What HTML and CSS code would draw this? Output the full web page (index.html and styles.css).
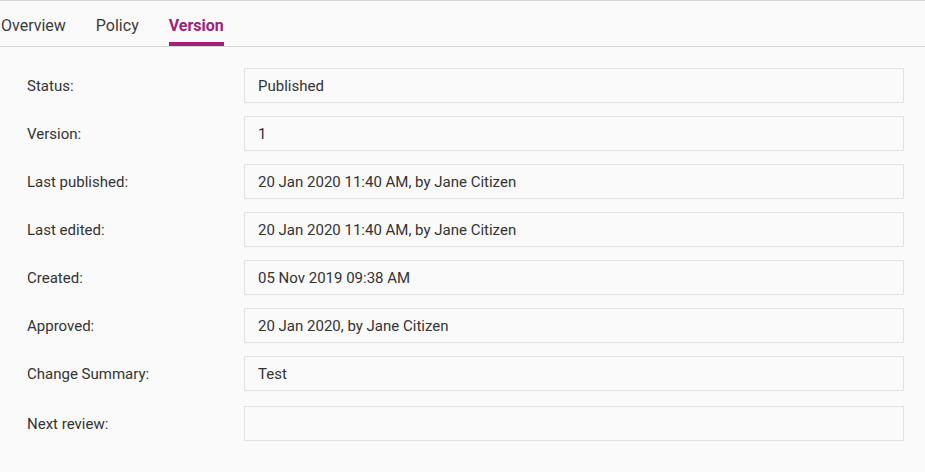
FILE: index.html
```html
<!DOCTYPE html>
<html>
<head>
<meta charset="utf-8">
<link rel="stylesheet" href="styles.css">
</head>
<body>
<nav class="tabs">
  <span class="tab">Overview</span>
  <span class="tab">Policy</span>
  <span class="tab active">Version</span>
</nav>
<main class="form">
  <div class="row"><div class="label">Status:</div><div class="field">Published</div></div>
  <div class="row"><div class="label">Version:</div><div class="field">1</div></div>
  <div class="row"><div class="label">Last published:</div><div class="field">20 Jan 2020 11:40 AM, by Jane Citizen</div></div>
  <div class="row"><div class="label">Last edited:</div><div class="field">20 Jan 2020 11:40 AM, by Jane Citizen</div></div>
  <div class="row"><div class="label">Created:</div><div class="field">05 Nov 2019 09:38 AM</div></div>
  <div class="row"><div class="label">Approved:</div><div class="field">20 Jan 2020, by Jane Citizen</div></div>
  <div class="row"><div class="label">Change Summary:</div><div class="field">Test</div></div>
  <div class="row last"><div class="label">Next review:</div><div class="field"></div></div>
</main>
</body>
</html>
```
FILE: styles.css
```css
html, body {
  margin: 0;
  padding: 0;
  background: #fafafa;
  font-family: Roboto, "Liberation Sans", sans-serif;
  color: #333;
}
.tabs {
  display: flex;
  gap: 30px;
  height: 45px;
  border-top: 1px solid #d6d6d6;
  border-bottom: 1px solid #d6d6d6;
  padding-left: 1px;
  box-sizing: content-box;
}
.tab {
  display: flex;
  align-items: center;
  font-size: 16px;
  color: #3a3a3a;
  padding-top: 8px;
  box-sizing: border-box;
  border-bottom: 4px solid transparent;
}
.tab.active {
  color: #a0207a;
  font-weight: 700;
  border-bottom-color: #a0207a;
}
.form {
  display: flex;
  flex-direction: column;
  gap: 13px;
  padding: 21px 21px 0 27px;
}
.row {
  display: flex;
  align-items: center;
}
.row.last {
  margin-top: 2px;
}
.label {
  width: 217px;
  font-size: 15px;
  color: #333;
}
.field {
  flex: 1;
  height: 35px;
  box-sizing: border-box;
  border: 1px solid #e2e2e2;
  padding: 0 13px;
  display: flex;
  align-items: center;
  font-size: 15px;
  color: #333;
}
```
